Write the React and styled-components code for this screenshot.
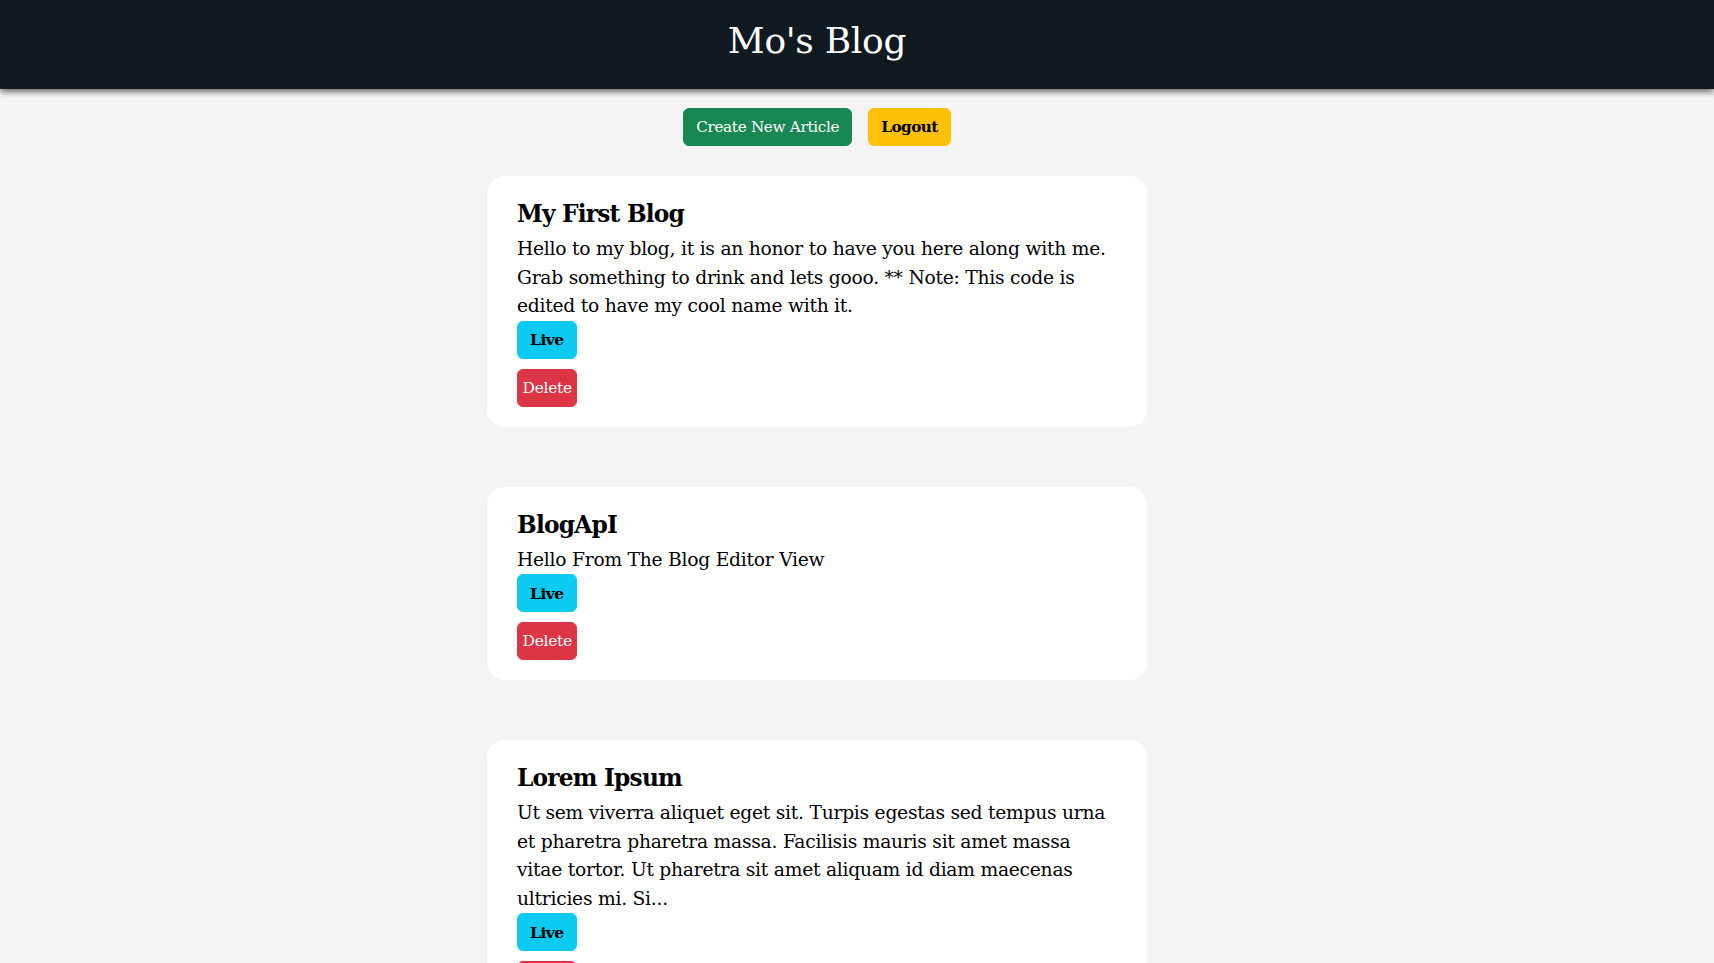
import React from "react";
import styled, { createGlobalStyle } from "styled-components";

const Global = createGlobalStyle`
  html, body { margin: 0; padding: 0; }
  body {
    background: #f4f4f4;
    font-family: "DejaVu Serif", "Liberation Serif", serif;
    color: #000;
  }
  * { box-sizing: border-box; }
`;

const Header = styled.header`
  background: #111921;
  height: 89px;
  display: flex;
  align-items: center;
  justify-content: center;
  padding: 0 80px 8px 0;
  box-shadow: 0 3px 6px rgba(0, 0, 0, 0.55);
  position: relative;
  z-index: 1;
`;

const SiteTitle = styled.h1`
  margin: 0;
  color: #fff;
  font-weight: 400;
  font-size: 36px;
  line-height: 48px;
  letter-spacing: -0.3px;
`;

const Main = styled.main`
  display: flex;
  flex-direction: column;
  align-items: center;
  padding: 19px 80px 40px 0;
`;

const Toolbar = styled.div`
  display: flex;
  gap: 16px;
  margin-bottom: 30px;
`;

const Button = styled.button`
  font-family: inherit;
  font-size: ${(p) => p.$size ?? 15.5}px;
  font-weight: ${(p) => (p.$bold ? 700 : 400)};
  letter-spacing: ${(p) => (p.$bold ? -0.5 : -0.3)}px;
  height: 38px;
  padding: 0 ${(p) => p.$pad ?? 12}px;
  border: 1px solid ${(p) => p.$bg};
  border-radius: 6px;
  background: ${(p) => p.$bg};
  color: ${(p) => p.$fg};
  cursor: pointer;
  display: inline-flex;
  align-items: center;
  justify-content: center;
`;

const CardList = styled.div`
  display: flex;
  flex-direction: column;
  gap: 60px;
`;

const Card = styled.article`
  width: 660px;
  background: #fff;
  border-radius: 18px;
  padding: 21px 30px 20px;
  display: flex;
  flex-direction: column;
  align-items: flex-start;
`;

const CardTitle = styled.h3`
  margin: 0 0 4px;
  font-size: 23.3px;
  font-weight: 700;
  line-height: 34px;
  letter-spacing: -0.8px;
`;

const CardBody = styled.p`
  margin: 0;
  font-size: 18.7px;
  line-height: 28.5px;
  letter-spacing: -0.25px;
`;

const Actions = styled.div`
  display: flex;
  flex-direction: column;
  align-items: flex-start;
  gap: 10px;
`;

const posts = [
  {
    title: "My First Blog",
    body:
      "Hello to my blog, it is an honor to have you here along with me. Grab something to drink and lets gooo. ** Note: This code is edited to have my cool name with it.",
  },
  { title: "BlogApI", body: "Hello From The Blog Editor View" },
  {
    title: "Lorem Ipsum",
    body:
      "Ut sem viverra aliquet eget sit. Turpis egestas sed tempus urna et pharetra pharetra massa. Facilisis mauris sit amet massa vitae tortor. Ut pharetra sit amet aliquam id diam maecenas ultricies mi. Si...",
  },
];

export default function App() {
  return (
    <>
      <Global />
      <Header>
        <SiteTitle>Mo's Blog</SiteTitle>
      </Header>
      <Main>
        <Toolbar>
          <Button $bg="#198754" $fg="#fff" $size={15.2}>Create New Article</Button>
          <Button $bg="#ffc107" $fg="#000" $bold $size={15.2}>Logout</Button>
        </Toolbar>
        <CardList>
          {posts.map((p) => (
            <Card key={p.title}>
              <CardTitle>{p.title}</CardTitle>
              <CardBody>{p.body}</CardBody>
              <Actions>
                <Button $bg="#0dcaf0" $fg="#000" $bold>Live</Button>
                <Button $bg="#dc3545" $fg="#fff" $pad={4.5}>Delete</Button>
              </Actions>
            </Card>
          ))}
        </CardList>
      </Main>
    </>
  );
}
